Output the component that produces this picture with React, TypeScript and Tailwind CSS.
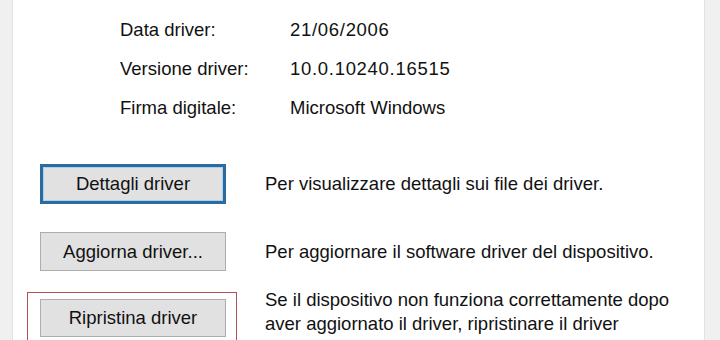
const info = [
  { label: "Data driver:", value: "21/06/2006", num: true },
  { label: "Versione driver:", value: "10.0.10240.16515", num: true },
  { label: "Firma digitale:", value: "Microsoft Windows", num: false },
];

const App = () => {
  return (
    <div
      className="w-[720px] h-[340px] overflow-hidden bg-[#f0f0f0] flex text-[18.5px] text-[#111]"
      style={{ fontFamily: '"Liberation Sans", Arial, sans-serif' }}
    >
      <div className="w-[12px] shrink-0" />
      <div className="flex-1 bg-white border-l border-r border-[#e2e2e2] pt-[10px]">
        <div className="pl-[107px]">
          {info.map(row => (
            <div key={row.label} className="flex items-center h-[39px]">
              <div className="w-[170px]">{row.label}</div>
              <div className={row.num ? "tracking-[0.7px]" : ""}>{row.value}</div>
            </div>
          ))}
        </div>

        <div className="mt-[37px] pl-[27px] flex items-center">
          <div className="w-[225px] shrink-0">
            <button className="w-[186px] h-[40px] bg-[#e1e1e1] border-[3px] border-[#2c6b9e] outline outline-1 -outline-offset-4 outline-[#a6d3f1]">
              Dettagli driver
            </button>
          </div>
          <div>Per visualizzare dettagli sui file dei driver.</div>
        </div>

        <div className="mt-[28px] pl-[27px] flex items-center">
          <div className="w-[225px] shrink-0">
            <button className="w-[186px] h-[39px] bg-[#e1e1e1] border border-[#adadad]">
              Aggiorna driver...
            </button>
          </div>
          <div>Per aggiornare il software driver del dispositivo.</div>
        </div>

        <div className="mt-[21px] pl-[14px] flex items-start">
          <div className="w-[210px] h-[60px] border-[1.5px] border-[#b24e58] pl-[12px] pt-[6px] shrink-0">
            <button className="w-[186px] h-[38px] bg-[#e1e1e1] border border-[#adadad]">
              Ripristina driver
            </button>
          </div>
          <div className="ml-[28px] leading-[24px] -mt-[4px] whitespace-nowrap">
            Se il dispositivo non funziona correttamente dopo
            <br />
            aver aggiornato il driver, ripristinare il driver
            <br />
            precedentemente installato.
          </div>
        </div>
      </div>
      <div className="w-[15px] shrink-0" />
    </div>
  );
};

export default App;
